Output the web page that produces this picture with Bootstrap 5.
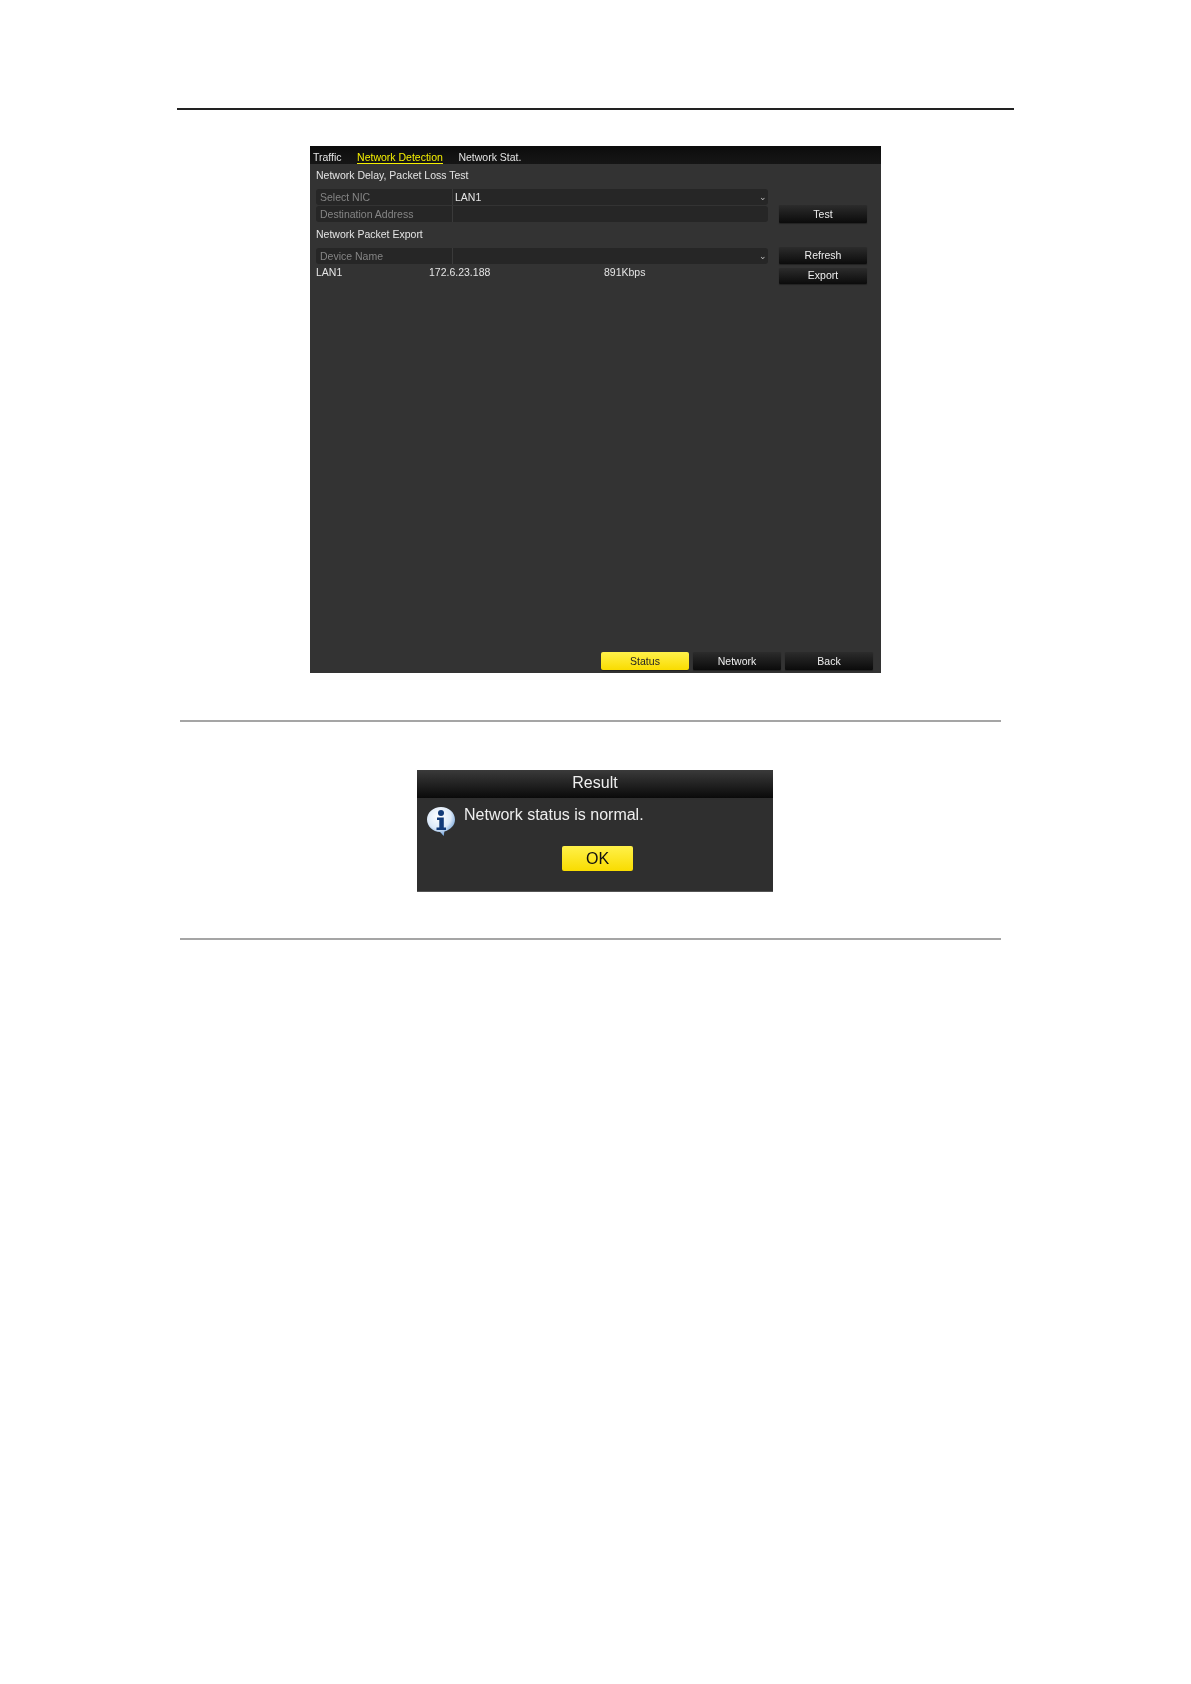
<!DOCTYPE html>
<html lang="en">
<head>
<meta charset="utf-8">
<title>Network Detection</title>
<link href="https://cdn.jsdelivr.net/npm/bootstrap@5.3.0/dist/css/bootstrap.min.css" rel="stylesheet">
<style>
html,body{background:#fff;margin:0}
.sheet{width:1191px;height:1684px;font-family:"Liberation Sans",Arial,sans-serif;padding-top:108px;overflow:hidden}
.head-rule{height:2px;width:837px;margin-left:177px;background:#222}
.dvr{width:571px;height:527px;margin:36px 0 0 310px;background:#333;color:#e4e4e4;font-size:10.5px;filter:blur(.4px)}
.tabbar{height:18px;background:linear-gradient(#0c0c0c,#161616);padding:5px 0 0 3px;gap:15.5px}
.tabbar span{line-height:12px}
.tab-on{color:#f5f000;border-bottom:1px solid #f5f000}
.body-area{padding:0 14px 3px 6px}
.sect{height:25px;line-height:23px}
.sect2{height:25px;line-height:22px}
.fld{height:16px;margin-bottom:1px;background:#262626;border-radius:3px;line-height:16px;width:452px}
.fld-lab{width:137px;padding-left:4px;color:#858585;border-right:1px solid #3a3a3a}
.fld-val{padding-left:2px}
.caret{padding-right:1px;color:#bbb;font-size:9px}
.dbtn{background:linear-gradient(#2c2c2c,#0b0b0b);color:#eee;border-radius:1px;width:88px;height:18px;line-height:19px;text-align:center;box-shadow:0 1px 1px #222}
.side-btns{margin-top:-1px;gap:4px}
.h-a{height:17px;line-height:16px}
.h-b{height:16px;line-height:15px}
.ybtn{background:linear-gradient(#fff14a,#f9dc00);color:#222;border-radius:2px}
.rowdata{height:14px;line-height:14px}
.c1{width:113px}
.c2{width:175px}
.foot{gap:4px;margin:auto -6px 0 0}
.rule2{height:2px;width:821px;margin-left:180px;background:#a5a5a5}
.rule-a{margin-top:47px}
.rule-b{margin-top:46px}
.dlg{width:356px;height:122px;margin:48px 0 0 417px;background:#2f2f2f;color:#eee;filter:blur(.4px);border-bottom:1px solid #555}
.dlg-head{height:28px;background:linear-gradient(#3a3a3a,#0a0a0a);font-size:16px;line-height:26px}
.dlg-msg{padding:8px 0 0 9px;gap:8px;font-size:16px;height:48px}
.dlg-txt{line-height:19px;margin-top:-1px}
.okbtn{width:71px;height:25px;line-height:26px;margin-left:145px;font-size:16px;color:#111}
</style>
</head>
<body>
<div class="sheet">
  <div class="head-rule"></div>
  <div class="dvr d-flex flex-column">
    <div class="tabbar d-flex align-items-start">
      <span>Traffic</span><span class="tab-on">Network Detection</span><span>Network Stat.</span>
    </div>
    <div class="body-area d-flex flex-column flex-grow-1">
      <div class="sect">Network Delay, Packet Loss Test</div>
      <div class="d-flex justify-content-between">
        <div>
          <div class="fld d-flex"><div class="fld-lab">Select NIC</div><div class="fld-val flex-grow-1">LAN1</div><div class="caret">&#8964;</div></div>
          <div class="fld d-flex"><div class="fld-lab">Destination Address</div><div class="fld-val flex-grow-1"></div></div>
        </div>
        <div class="dbtn align-self-end">Test</div>
      </div>
      <div class="sect2">Network Packet Export</div>
      <div class="d-flex justify-content-between">
        <div>
          <div class="fld d-flex"><div class="fld-lab">Device Name</div><div class="fld-val flex-grow-1"></div><div class="caret">&#8964;</div></div>
          <div class="rowdata d-flex"><div class="c1">LAN1</div><div class="c2">172.6.23.188</div><div>891Kbps</div></div>
        </div>
        <div class="side-btns d-flex flex-column">
          <div class="dbtn h-a">Refresh</div>
          <div class="dbtn h-b">Export</div>
        </div>
      </div>
      <div class="foot d-flex justify-content-end">
        <div class="dbtn ybtn">Status</div>
        <div class="dbtn">Network</div>
        <div class="dbtn">Back</div>
      </div>
    </div>
  </div>
  <div class="rule2 rule-a"></div>
  <div class="dlg">
    <div class="dlg-head text-center">Result</div>
    <div class="dlg-msg d-flex">
      <svg width="30" height="31" viewBox="0 0 30 31" aria-hidden="true">
        <defs><radialGradient id="bub" cx=".42" cy=".32" r=".72"><stop offset="0" stop-color="#fff"/><stop offset=".6" stop-color="#dce9f8"/><stop offset="1" stop-color="#5c93d2"/></radialGradient></defs>
        <path d="M15 1C7 1 1 6.700 1 13.500S7 26 14 26c2 2 2.800 3 4 4 0-2 0-3.200 .5-4.500C25 23.500 29 19 29 13.500 29 6.700 23 1 15 1Z" fill="url(#bub)"/>
        <circle cx="15" cy="7" r="3" fill="#123a78"/>
        <path d="M11 11.500h6.800v10H20v2.500h-9.500v-2.500h2.800v-7.500H11Z" fill="#123a78"/>
      </svg>
      <div class="dlg-txt">Network status is normal.</div>
    </div>
    <div class="okbtn ybtn text-center">OK</div>
  </div>
  <div class="rule2 rule-b"></div>
</div>
</body>
</html>
